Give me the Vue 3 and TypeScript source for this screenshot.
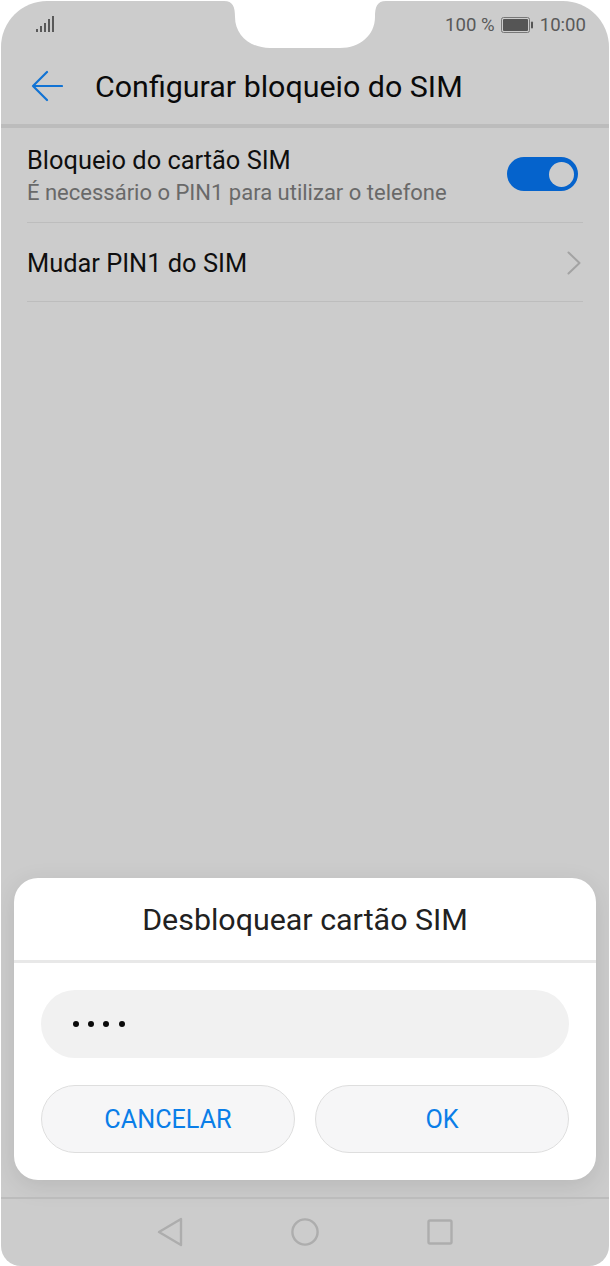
<template>
  <div class="phone">
    <div class="screen">
      <!-- notch -->
      <svg class="notch" width="162" height="48" viewBox="0 0 162 48">
        <path d="M0 0H162C153 0 151 6 151 16C151 34 136 47 116 47H46C26 47 11 34 11 16C11 6 9 0 0 0Z" fill="#fff" />
      </svg>

      <div class="status">
        <svg class="signal" width="20" height="18" viewBox="0 0 20 18">
          <rect x="0" y="14" width="2" height="3" fill="#595959" />
          <rect x="4" y="11" width="2" height="6" fill="#595959" />
          <rect x="8" y="8" width="2" height="9" fill="#595959" />
          <rect x="12" y="4" width="2" height="13" fill="#595959" />
          <rect x="16" y="1" width="2" height="16" fill="#595959" />
        </svg>
        <div class="status-right">
          <span>100 %</span>
          <svg width="33" height="16" viewBox="0 0 33 16">
            <rect x="0.5" y="0.5" width="28" height="15" rx="2" fill="none" stroke="#777" />
            <rect x="2" y="2" width="25" height="12" rx="1" fill="#555" />
            <rect x="30" y="4.5" width="2" height="7" rx="1" fill="#555" />
          </svg>
          <span>10:00</span>
        </div>
      </div>

      <div class="header">
        <svg class="back" width="32" height="32" viewBox="0 0 32 32">
          <path d="M16 2L2 16L16 30M2 16H31" fill="none" stroke="#1173d4" stroke-width="2.2" stroke-linecap="round" stroke-linejoin="round" />
        </svg>
        <h1>{{ title }}</h1>
      </div>

      <div class="list">
        <div class="row row-first">
          <div class="row-text">
            <div class="row-title">Bloqueio do cartão SIM</div>
            <div class="row-sub">É necessário o PIN1 para utilizar o telefone</div>
          </div>
          <div class="toggle"><span class="knob"></span></div>
        </div>
        <div class="row row-second">
          <div class="row-title">Mudar PIN1 do SIM</div>
          <svg width="14" height="24" viewBox="0 0 14 24">
            <path d="M1.5 1.5L12.5 12L1.5 22.5" fill="none" stroke="#a3a3a3" stroke-width="2" stroke-linecap="round" stroke-linejoin="round" />
          </svg>
        </div>
      </div>

      <div class="dialog-area">
        <div class="dialog">
          <div class="dialog-title">Desbloquear cartão SIM</div>
          <div class="dialog-body">
            <div class="pin">
              <span v-for="n in 4" :key="n" class="dot"></span>
            </div>
            <div class="actions">
              <button v-for="a in actions" :key="a">{{ a }}</button>
            </div>
          </div>
        </div>
      </div>

      <div class="nav">
        <svg width="26" height="30" viewBox="0 0 26 30">
          <path d="M24 2V28L2 15Z" fill="none" stroke="#adadad" stroke-width="2.4" stroke-linejoin="round" />
        </svg>
        <svg width="28" height="28" viewBox="0 0 28 28">
          <circle cx="14" cy="14" r="12.6" fill="none" stroke="#adadad" stroke-width="2.4" />
        </svg>
        <svg width="26" height="26" viewBox="0 0 26 26">
          <rect x="1.5" y="1.5" width="23" height="23" rx="1.5" fill="none" stroke="#adadad" stroke-width="2.4" />
        </svg>
      </div>
    </div>
  </div>
</template>

<script setup lang="ts">
const title = 'Configurar bloqueio do SIM'
const actions: string[] = ['CANCELAR', 'OK']
</script>

<style>
html,
body {
  margin: 0;
  background: #fff;
}
</style>

<style scoped>
.phone {
  width: 610px;
  height: 1266px;
  padding: 1px 1px 0;
  box-sizing: border-box;
  background: #fff;
  font-family: Roboto, "Liberation Sans", sans-serif;
  overflow: hidden;
}

.screen {
  position: relative;
  height: 1265px;
  display: flex;
  flex-direction: column;
  background: #ccc;
  border-radius: 46px 46px 20px 20px;
  overflow: hidden;
}

.notch {
  position: absolute;
  left: 223px;
  top: 0;
}

.status {
  height: 47px;
  box-sizing: border-box;
  padding: 14px 23px 0 35px;
  display: flex;
  justify-content: space-between;
  align-items: flex-start;
}

.status-right {
  display: flex;
  align-items: center;
  gap: 6px;
  font-size: 18.6px;
  line-height: 20px;
  color: #595959;
}

.header {
  height: 76px;
  display: flex;
  align-items: center;
  border-bottom: 4px solid #bcbcbc;
  padding: 2px 0 0 30px;
  margin-top: -2px;
}

.back {
  margin-right: 32px;
}

h1 {
  margin: 0;
  font-size: 30.4px;
  font-weight: 400;
  color: #0a0a0a;
}

.list {
  padding: 0 26px;
}

.row {
  display: flex;
  justify-content: space-between;
  align-items: center;
  border-bottom: 1px solid #bdbdbd;
  box-sizing: border-box;
}

.row-first {
  height: 95px;
}

.row-second {
  height: 79px;
  padding: 2px 2px 0 0;
}

.row-text {
  padding-top: 3px;
}

.row-title {
  font-size: 25.4px;
  line-height: 30px;
  color: #0f0f0f;
}

.row-sub {
  margin-top: 3px;
  font-size: 22px;
  line-height: 30px;
  color: #696969;
}

.toggle {
  width: 71px;
  height: 34px;
  margin: -2px 5px 0 0;
  border-radius: 17px;
  background: #0563cc;
  display: flex;
  align-items: center;
  justify-content: flex-end;
  padding-right: 4px;
  box-sizing: border-box;
}

.knob {
  width: 25px;
  height: 25px;
  border-radius: 50%;
  background: #ccc;
}

.dialog-area {
  flex: 1;
  display: flex;
  flex-direction: column;
  justify-content: flex-end;
  padding: 0 13px 17px;
}

.dialog {
  height: 302px;
  background: #fff;
  border-radius: 24px;
  box-shadow: 0 6px 24px rgba(0, 0, 0, 0.1);
}

.dialog-title {
  height: 85px;
  box-sizing: border-box;
  display: flex;
  align-items: center;
  justify-content: center;
  border-bottom: 3px solid #e8e8e8;
  font-size: 30.4px;
  color: #212121;
}

.dialog-body {
  padding: 27px 27px 0;
}

.pin {
  height: 68px;
  border-radius: 34px;
  background: #f1f1f1;
  display: flex;
  align-items: center;
  gap: 9.4px;
  padding: 0 0 0 31.5px;
  box-sizing: border-box;
}

.dot {
  width: 6px;
  height: 6px;
  border-radius: 50%;
  background: #0a0a0a;
}

.actions {
  display: grid;
  grid-template-columns: 1fr 1fr;
  gap: 20px;
  margin-top: 27px;
}

button {
  height: 68px;
  border: 1px solid #dedede;
  border-radius: 34px;
  background: #f6f6f7;
  color: #0a7ee8;
  font-family: inherit;
  font-size: 25.2px;
  padding: 1px 0 0;
}

.nav {
  height: 69px;
  border-top: 2px solid #bcbcbc;
  box-sizing: border-box;
  display: grid;
  grid-template-columns: 26px 28px 26px;
  justify-content: center;
  align-items: center;
  gap: 108px;
  padding-bottom: 1px;
}
</style>
